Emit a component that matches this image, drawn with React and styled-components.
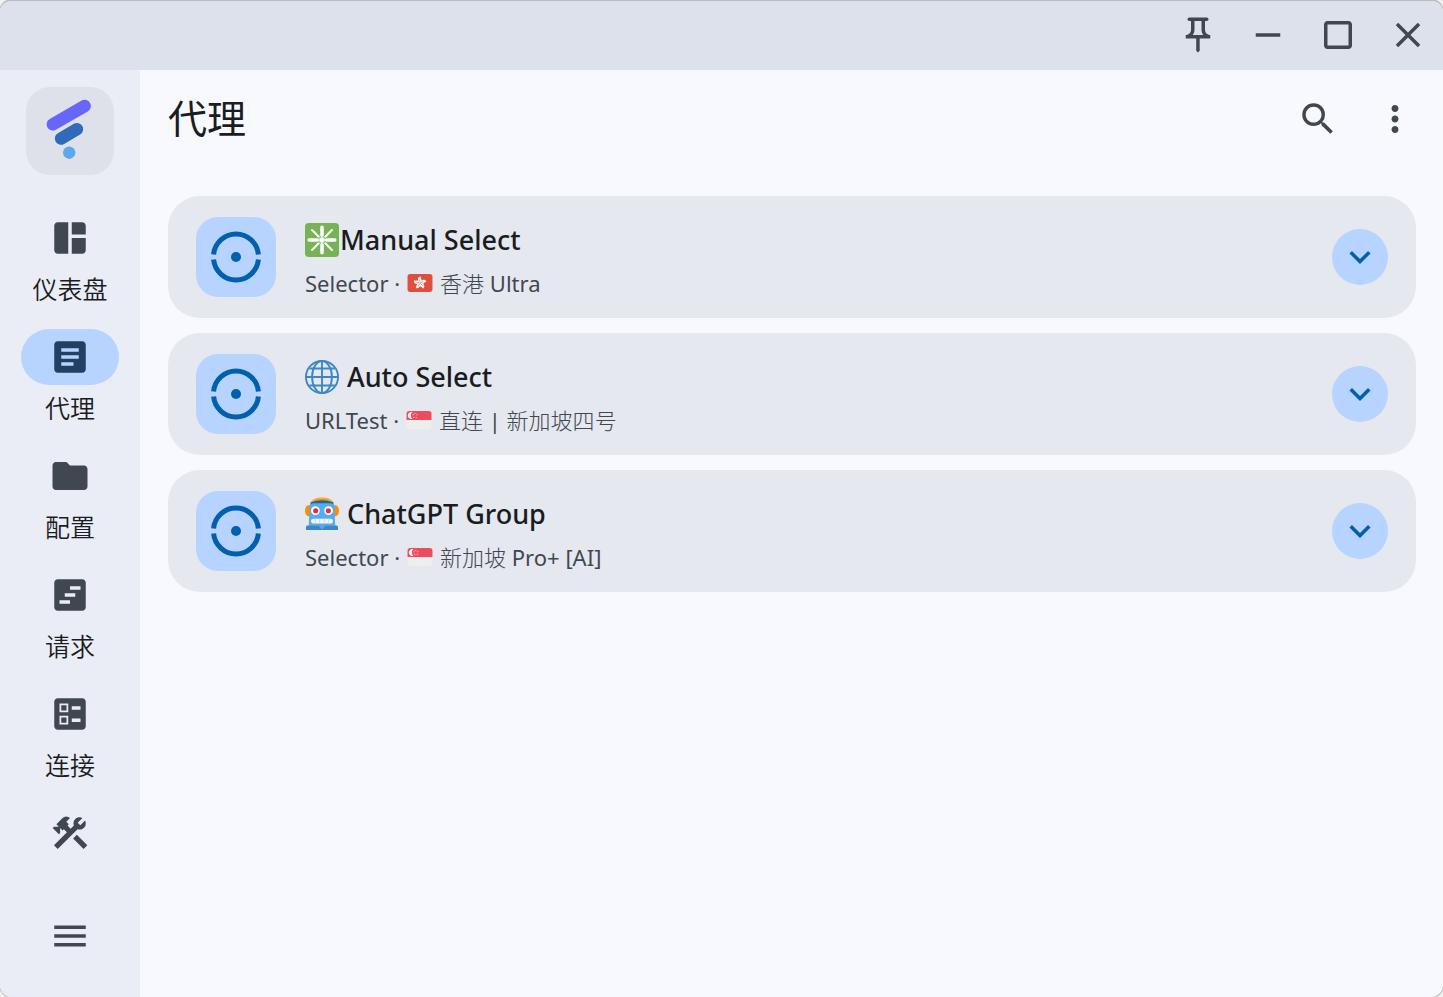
import { useState } from "react";
import styled, { createGlobalStyle } from "styled-components";
import {
  MdArticle,
  MdBallot,
  MdClose,
  MdConstruction,
  MdCropSquare,
  MdExpandMore,
  MdFolder,
  MdMenu,
  MdMoreVert,
  MdOutlinePushPin,
  MdRemove,
  MdSearch,
  MdSpaceDashboard,
  MdViewTimeline,
} from "react-icons/md";

const navItems = [
  { id: "dashboard", label: "仪表盘", icon: MdSpaceDashboard },
  { id: "proxies", label: "代理", icon: MdArticle },
  { id: "profiles", label: "配置", icon: MdFolder },
  { id: "requests", label: "请求", icon: MdViewTimeline },
  { id: "connections", label: "连接", icon: MdBallot },
  { id: "tools", icon: MdConstruction },
];

const Logo = () => (
  <svg width="88" height="88" viewBox="0 0 88 88" fill="none" aria-hidden="true">
    <path d="M26.8 37.3L58.7 19" stroke="#6666fb" strokeWidth="12.4" strokeLinecap="round" />
    <path d="M35 51.6L51 42.2" stroke="#316ab8" strokeWidth="12.4" strokeLinecap="round" />
    <circle cx="43.2" cy="65.7" r="6.2" fill="#5ca8e9" />
  </svg>
);

const Target = () => (
  <svg width="52" height="52" viewBox="0 0 52 52" fill="none" aria-hidden="true">
    <path d="M3.6 23.4A22.5 22.5 0 0 1 48.4 23.4" stroke="#0060ad" strokeWidth="5" />
    <path d="M3.6 28.6A22.5 22.5 0 0 0 48.4 28.6" stroke="#0060ad" strokeWidth="5" />
    <circle cx="26" cy="26" r="5" fill="#0060ad" />
  </svg>
);

const Sparkle = () => (
  <Emoji viewBox="0 0 36 36" aria-hidden="true">
    <rect width="36" height="36" rx="4" fill="#77b255" />
    <g stroke="#fff" strokeLinecap="round">
      <path d="M18 4.5V13M18 23v8.5M4.5 18H13M23 18h8.5" strokeWidth="3.8" />
      <path d="M7.5 7.5l7 7M28.5 7.5l-7 7M7.5 28.5l7-7M28.5 28.5l-7-7" strokeWidth="2.2" />
    </g>
    <circle cx="18" cy="18" r="3" fill="#fff" />
  </Emoji>
);

const Globe = () => (
  <Emoji viewBox="0 0 36 36" fill="none" stroke="#3b88c3" strokeWidth="2" aria-hidden="true">
    <circle cx="18" cy="18" r="17" />
    <ellipse cx="18" cy="18" rx="10.5" ry="17" />
    <path d="M18 1v34M1 18h34M4.5 9h27M4.5 27h27" />
  </Emoji>
);

const Robot = () => (
  <Emoji viewBox="0 0 36 36" aria-hidden="true">
    <ellipse cx="4" cy="14.5" rx="4" ry="6" fill="#f4900c" />
    <ellipse cx="32" cy="14.5" rx="4" ry="6" fill="#f4900c" />
    <path d="M6 6c1-3.5 6-5.5 12-5.5S29 2.5 30 6z" fill="#ffac33" />
    <path d="M10 4c1-2.5 15-2.5 16 0z" fill="#f4900c" />
    <path d="M6 5.5Q18 1.5 30 5.5L31 12H5z" fill="#226699" />
    <path d="M5 9q1-2.5 4-2.5h18q3 0 4 2.5l1 21H4z" fill="#55acee" />
    <circle cx="11" cy="14.5" r="4.6" fill="#fff" />
    <circle cx="25" cy="14.5" r="4.6" fill="#fff" />
    <circle cx="11.3" cy="14.5" r="2.7" fill="#dd2e44" />
    <circle cx="24.7" cy="14.5" r="2.7" fill="#dd2e44" />
    <rect x="6.5" y="23" width="23" height="5" rx="2" fill="#f5f8fa" />
    <path d="M11 23v5M15.5 23v5M20.5 23v5M25 23v5" stroke="#ccd6dd" />
    <path d="M1 35v-2.5Q1 30 4 30h28q3 0 3 2.5V35z" fill="#3b88c3" />
    <path d="M14 30h8l-4 4.5z" fill="#55acee" />
  </Emoji>
);

const petals = [0, 72, 144, 216, 288];

const HongKong = () => (
  <Flag viewBox="0 0 36 26" role="img" aria-label="HK">
    <rect width="36" height="26" rx="4" fill="#de4f3f" />
    {petals.map((angle) => (
      <g key={angle} transform={`rotate(${angle} 18 13)`}>
        <path d="M18 12.5c-4-2.5-4-7.5.5-8.8 1.6 1.8.2 2.5 1.3 3.5 1.5 1.7.2 4-1.8 5.3z" fill="#fff" />
        <path d="M18 11.5q-1.2-2-.3-4" stroke="#de4f3f" strokeWidth=".8" fill="none" />
      </g>
    ))}
  </Flag>
);

const Singapore = () => (
  <Flag viewBox="0 0 36 26" role="img" aria-label="SG">
    <path d="M0 13V4a4 4 0 0 1 4-4h28a4 4 0 0 1 4 4v9z" fill="#ed4c5c" />
    <path d="M0 13h36v9a4 4 0 0 1-4 4H4a4 4 0 0 1-4-4z" fill="#eee" />
    <path d="M8.5 1.5a5.2 5.2 0 1 0 0 10 6.5 6.5 0 0 1 0-10z" fill="#fff" />
    <g fill="#fff">
      <circle cx="12" cy="3.2" r=".8" />
      <circle cx="15" cy="5.5" r=".8" />
      <circle cx="9.5" cy="5.5" r=".8" />
      <circle cx="10.5" cy="9" r=".8" />
      <circle cx="14" cy="9" r=".8" />
    </g>
  </Flag>
);

const groups = [
  { name: "Manual Select", emoji: Sparkle, tight: true, type: "Selector", flag: HongKong, now: "香港 Ultra" },
  { name: "Auto Select", emoji: Globe, type: "URLTest", flag: Singapore, now: "直连 | 新加坡四号" },
  { name: "ChatGPT Group", emoji: Robot, type: "Selector", flag: Singapore, now: "新加坡 Pro+ [AI]" },
];

const GroupCard = ({ group }) => {
  const EmojiIcon = group.emoji;
  const FlagIcon = group.flag;

  return (
    <Card>
      <Tile>
        <Target />
      </Tile>
      <Info>
        <Name $tight={group.tight}>
          <EmojiIcon />
          {group.name}
        </Name>
        <Detail>
          <span>{group.type} ·</span>
          <FlagIcon />
          <span>{group.now}</span>
        </Detail>
      </Info>
      <ExpandButton aria-label={`Expand ${group.name}`}>
        <MdExpandMore />
      </ExpandButton>
    </Card>
  );
};

const App = () => {
  const [page, setPage] = useState("proxies");

  return (
    <>
      <GlobalStyle />
      <Window>
        <TitleBar>
          <WindowButton aria-label="Pin">
            <MdOutlinePushPin />
          </WindowButton>
          <WindowButton aria-label="Minimize">
            <MdRemove />
          </WindowButton>
          <WindowButton aria-label="Maximize">
            <MdCropSquare />
          </WindowButton>
          <WindowButton aria-label="Close">
            <MdClose />
          </WindowButton>
        </TitleBar>

        <Body>
          <Sidebar>
            <LogoBox>
              <Logo />
            </LogoBox>
            <Nav>
              {navItems.map(({ id, label, icon: Icon }) => (
                <NavButton key={id} aria-label={label || id} onClick={() => setPage(id)}>
                  <Indicator $active={page === id}>
                    <Icon />
                  </Indicator>
                  {label && <NavLabel>{label}</NavLabel>}
                </NavButton>
              ))}
            </Nav>
            <MenuButton aria-label="Menu">
              <MdMenu />
            </MenuButton>
          </Sidebar>

          <Main>
            <Header>
              <Title>代理</Title>
              <Actions>
                <ActionButton aria-label="Search">
                  <MdSearch />
                </ActionButton>
                <ActionButton aria-label="More">
                  <MdMoreVert />
                </ActionButton>
              </Actions>
            </Header>
            <List>
              {groups.map((group) => (
                <GroupCard key={group.name} group={group} />
              ))}
            </List>
          </Main>
        </Body>
      </Window>
    </>
  );
};

const GlobalStyle = createGlobalStyle`
  * {
    box-sizing: border-box;
  }

  body {
    margin: 0;
    background: #f1f1f1;
    color: #191c20;
    font-family: "Noto Sans", "Noto Sans CJK SC Light", "Noto Sans CJK SC", sans-serif;
  }

  button {
    padding: 0;
    border: 0;
    background: none;
    color: #414751;
    font: inherit;
    cursor: pointer;
  }

  svg {
    display: block;
    flex: none;
  }
`;

const Window = styled.div`
  display: flex;
  flex-direction: column;
  height: 100vh;
  overflow: hidden;
  border-top: 1px solid #b9bbbd;
  border-radius: 12px;
  background: #f8f9fe;
  box-shadow: 0 0 0 1px #b9bbbd;
`;

const TitleBar = styled.header`
  display: flex;
  justify-content: flex-end;
  height: 69px;
  flex: none;
  padding-bottom: 2px;
  background: #dde1ec;
`;

const WindowButton = styled.button`
  display: flex;
  align-items: center;
  justify-content: center;
  width: 70px;
  font-size: 42px;
`;

const Body = styled.div`
  display: flex;
  flex: 1;
  min-height: 0;
`;

const Sidebar = styled.aside`
  display: flex;
  flex-direction: column;
  align-items: center;
  width: 140px;
  flex: none;
  padding: 17px 0 40px;
  background: #eaedf6;
`;

const LogoBox = styled.div`
  flex: none;
  border-radius: 24px;
  background: #dee1e9;
`;

const Nav = styled.nav`
  display: flex;
  flex-direction: column;
  flex: 1;
  gap: 23px;
  min-height: 0;
  margin-top: 35px;
  overflow: hidden;
`;

const NavButton = styled.button`
  display: flex;
  flex-direction: column;
  align-items: center;
  gap: 5px;
  flex: none;
  && {
    color: #191c20;
  }
`;

const Indicator = styled.span`
  display: flex;
  align-items: center;
  justify-content: center;
  width: 98px;
  height: 56px;
  border-radius: 28px;
  background: ${({ $active }) => ($active ? "#b7d3ff" : "transparent")};
  color: ${({ $active }) => ($active ? "#224062" : "#414751")};
  font-size: 42px;
`;

const NavLabel = styled.span`
  font-family: "Noto Sans CJK SC", sans-serif;
  font-size: 25px;
  font-weight: 350;
  line-height: 35px;
`;

const MenuButton = styled.button`
  font-size: 42px;
`;

const Main = styled.main`
  flex: 1;
  min-width: 0;
  padding: 0 27px 0 28px;
`;

const Header = styled.div`
  display: flex;
  align-items: center;
  justify-content: space-between;
  height: 98px;
`;

const Title = styled.h1`
  margin: 0;
  padding-bottom: 6px;
  font-family: "Noto Sans CJK SC", sans-serif;
  font-size: 39px;
  font-weight: 400;
  line-height: 56px;
`;

const Actions = styled.div`
  display: flex;
  gap: 7px;
  margin-right: -14px;
`;

const ActionButton = styled.button`
  display: flex;
  align-items: center;
  justify-content: center;
  width: 70px;
  height: 70px;
  font-size: 42px;
`;

const List = styled.div`
  display: flex;
  flex-direction: column;
  gap: 15px;
  padding-top: 28px;
`;

const Card = styled.section`
  display: flex;
  align-items: center;
  gap: 29px;
  padding: 19px 28px;
  border-radius: 32px;
  background: #e5e8ef;
`;

const Tile = styled.div`
  display: flex;
  align-items: center;
  justify-content: center;
  width: 80px;
  height: 80px;
  flex: none;
  border-radius: 22px;
  background: #b7d3ff;
`;

const Info = styled.div`
  display: flex;
  flex-direction: column;
  gap: 2px;
  flex: 1;
  min-width: 0;
`;

const Name = styled.h2`
  display: flex;
  align-items: center;
  gap: ${({ $tight }) => ($tight ? "1px" : "8px")};
  margin: 0;
  font-size: 27px;
  font-weight: 500;
  line-height: 50px;
`;

const Detail = styled.p`
  display: flex;
  align-items: center;
  gap: 7px;
  margin: 0;
  color: #414751;
  font-size: 22px;
  font-weight: 400;
  line-height: 32px;
`;

const Emoji = styled.svg`
  width: 34px;
  height: 34px;
`;

const Flag = styled.svg`
  width: 26px;
  height: 18px;
`;

const ExpandButton = styled.button`
  display: flex;
  align-items: center;
  justify-content: center;
  width: 56px;
  height: 56px;
  flex: none;
  border-radius: 50%;
  && {
    background: #b7d3ff;
    color: #0060ad;
  }
  font-size: 42px;
`;

export default App;
